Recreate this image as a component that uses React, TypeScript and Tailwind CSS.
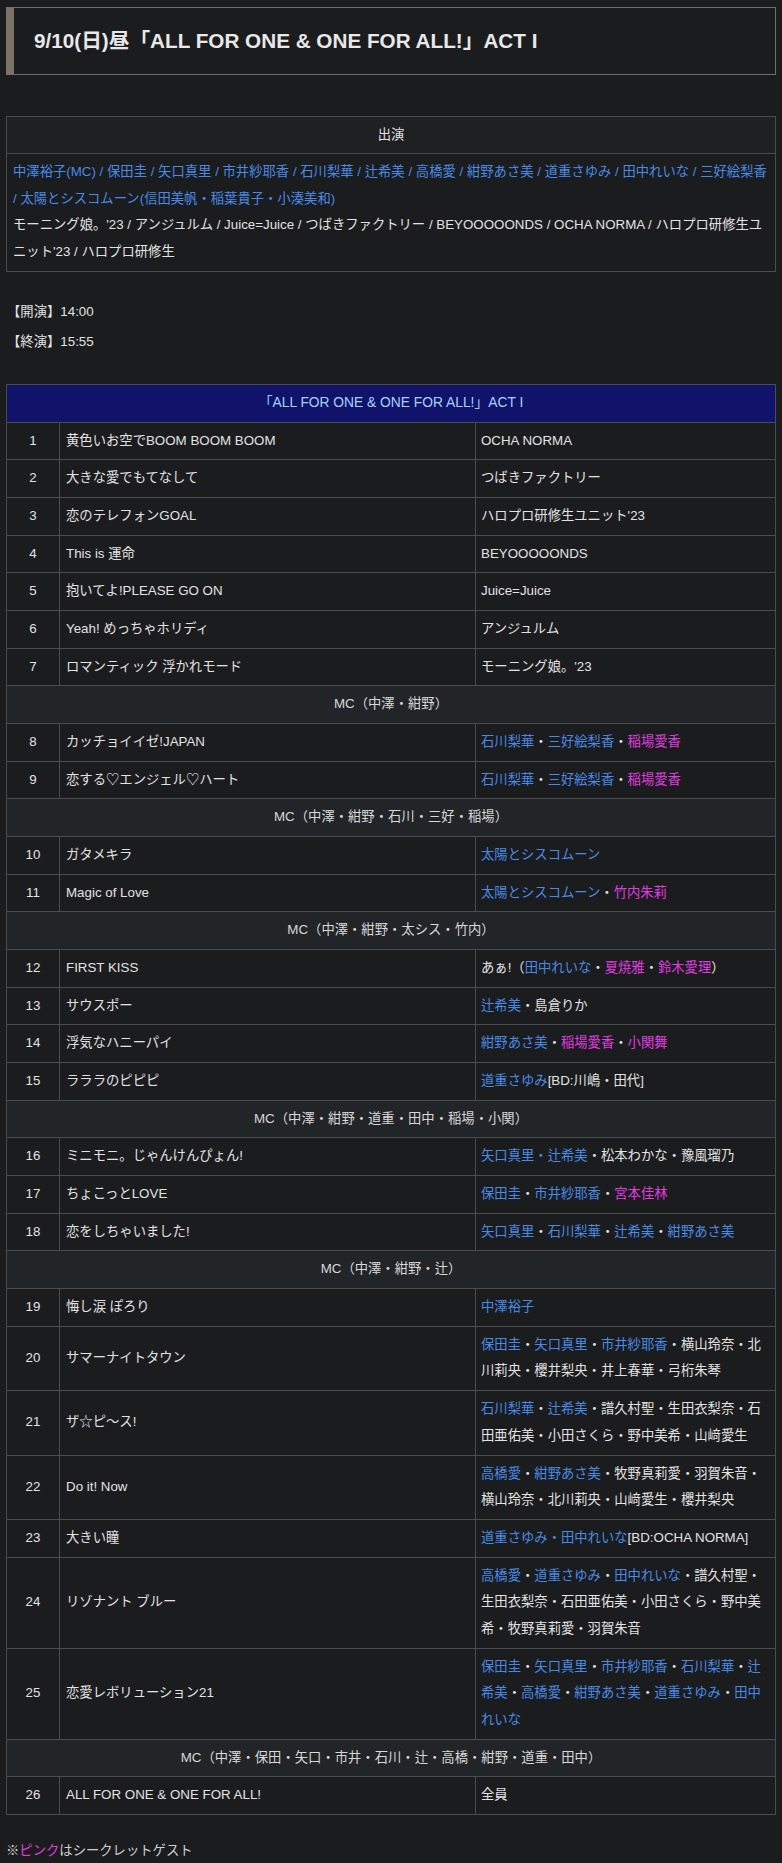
type Seg = [string, "n" | "b" | "p"];
type Row = { no?: number; song?: string; members?: Seg[]; mc?: string };

const rows: Row[] = [
  { no: 1, song: "黄色いお空でBOOM BOOM BOOM", members: [["OCHA NORMA", "n"]] },
  { no: 2, song: "大きな愛でもてなして", members: [["つばきファクトリー", "n"]] },
  { no: 3, song: "恋のテレフォンGOAL", members: [["ハロプロ研修生ユニット'23", "n"]] },
  { no: 4, song: "This is 運命", members: [["BEYOOOOONDS", "n"]] },
  { no: 5, song: "抱いてよ!PLEASE GO ON", members: [["Juice=Juice", "n"]] },
  { no: 6, song: "Yeah! めっちゃホリディ", members: [["アンジュルム", "n"]] },
  { no: 7, song: "ロマンティック 浮かれモード", members: [["モーニング娘。'23", "n"]] },
  { mc: "MC（中澤・紺野）" },
  { no: 8, song: "カッチョイイゼ!JAPAN", members: [["石川梨華", "b"], ["・", "n"], ["三好絵梨香", "b"], ["・", "n"], ["稲場愛香", "p"]] },
  { no: 9, song: "恋する♡エンジェル♡ハート", members: [["石川梨華", "b"], ["・", "n"], ["三好絵梨香", "b"], ["・", "n"], ["稲場愛香", "p"]] },
  { mc: "MC（中澤・紺野・石川・三好・稲場）" },
  { no: 10, song: "ガタメキラ", members: [["太陽とシスコムーン", "b"]] },
  { no: 11, song: "Magic of Love", members: [["太陽とシスコムーン", "b"], ["・", "n"], ["竹内朱莉", "p"]] },
  { mc: "MC（中澤・紺野・太シス・竹内）" },
  { no: 12, song: "FIRST KISS", members: [["あぁ!（", "n"], ["田中れいな", "b"], ["・", "n"], ["夏焼雅", "p"], ["・", "n"], ["鈴木愛理", "p"], ["）", "n"]] },
  { no: 13, song: "サウスポー", members: [["辻希美", "b"], ["・島倉りか", "n"]] },
  { no: 14, song: "浮気なハニーパイ", members: [["紺野あさ美", "b"], ["・", "n"], ["稲場愛香", "p"], ["・", "n"], ["小関舞", "p"]] },
  { no: 15, song: "ラララのピピピ", members: [["道重さゆみ", "b"], ["[BD:川嶋・田代]", "n"]] },
  { mc: "MC（中澤・紺野・道重・田中・稲場・小関）" },
  { no: 16, song: "ミニモニ。じゃんけんぴょん!", members: [["矢口真里・辻希美", "b"], ["・松本わかな・豫風瑠乃", "n"]] },
  { no: 17, song: "ちょこっとLOVE", members: [["保田圭", "b"], ["・", "n"], ["市井紗耶香", "b"], ["・", "n"], ["宮本佳林", "p"]] },
  { no: 18, song: "恋をしちゃいました!", members: [["矢口真里", "b"], ["・", "n"], ["石川梨華", "b"], ["・", "n"], ["辻希美", "b"], ["・", "n"], ["紺野あさ美", "b"]] },
  { mc: "MC（中澤・紺野・辻）" },
  { no: 19, song: "悔し涙 ぽろり", members: [["中澤裕子", "b"]] },
  { no: 20, song: "サマーナイトタウン", members: [["保田圭", "b"], ["・", "n"], ["矢口真里", "b"], ["・", "n"], ["市井紗耶香", "b"], ["・横山玲奈・北川莉央・櫻井梨央・井上春華・弓桁朱琴", "n"]] },
  { no: 21, song: "ザ☆ピ～ス!", members: [["石川梨華", "b"], ["・", "n"], ["辻希美", "b"], ["・譜久村聖・生田衣梨奈・石田亜佑美・小田さくら・野中美希・山﨑愛生", "n"]] },
  { no: 22, song: "Do it! Now", members: [["高橋愛", "b"], ["・", "n"], ["紺野あさ美", "b"], ["・牧野真莉愛・羽賀朱音・横山玲奈・北川莉央・山﨑愛生・櫻井梨央", "n"]] },
  { no: 23, song: "大きい瞳", members: [["道重さゆみ・田中れいな", "b"], ["[BD:OCHA NORMA]", "n"]] },
  { no: 24, song: "リゾナント ブルー", members: [["高橋愛", "b"], ["・", "n"], ["道重さゆみ", "b"], ["・", "n"], ["田中れいな", "b"], ["・譜久村聖・生田衣梨奈・石田亜佑美・小田さくら・野中美希・牧野真莉愛・羽賀朱音", "n"]] },
  { no: 25, song: "恋愛レボリューション21", members: [["保田圭", "b"], ["・", "n"], ["矢口真里", "b"], ["・", "n"], ["市井紗耶香", "b"], ["・", "n"], ["石川梨華", "b"], ["・", "n"], ["辻希美", "b"], ["・", "n"], ["高橋愛", "b"], ["・", "n"], ["紺野あさ美", "b"], ["・", "n"], ["道重さゆみ", "b"], ["・", "n"], ["田中れいな", "b"]] },
  { mc: "MC（中澤・保田・矢口・市井・石川・辻・高橋・紺野・道重・田中）" },
  { no: 26, song: "ALL FOR ONE & ONE FOR ALL!", members: [["全員", "n"]] },
];

function Members({ segs }: { segs: Seg[] }) {
  return (
    <>
      {segs.map(([t, c], i) => (
        <span
          key={i}
          className={c === "b" ? "text-[#4a8ae6]" : c === "p" ? "text-[#e03ce0]" : "text-[#e2e2e2]"}
        >
          {t}
        </span>
      ))}
    </>
  );
}

export default function App() {
  return (
    <div
      className="min-h-screen bg-[#1b1c1e] px-[6px] pt-[7px] pb-[10px] text-[13.33px] leading-[2] text-[#e2e2e2]"
      style={{ fontFamily: '"Liberation Sans", "Noto Sans CJK JP", sans-serif' }}
    >
      {/* Title */}
      <div className="flex h-[68px] items-center border border-[#6e6e6e] border-l-[8px] border-l-[#7b7366] pl-[20px]">
        <h1 className="text-[20.7px] font-bold leading-none text-[#e8e8e8]">
          9/10(日)昼「ALL FOR ONE &amp; ONE FOR ALL!」ACT I
        </h1>
      </div>

      {/* Cast */}
      <div className="mt-[41px] border border-[#4a4b4d]">
        <div className="flex h-[37px] items-center justify-center border-b border-[#4a4b4d] bg-[#1e2022]">
          出演
        </div>
        <div className="px-[6px] py-[5px] leading-[26.67px]">
          <div className="text-[#4a8ae6]">
            中澤裕子(MC) / 保田圭 / 矢口真里 / 市井紗耶香 / 石川梨華 / 辻希美 / 高橋愛 / 紺野あさ美 / 道重さゆみ / 田中れいな / 三好絵梨香 / 太陽とシスコムーン(信田美帆・稲葉貴子・小湊美和)
          </div>
          <div>
            モーニング娘。'23 / アンジュルム / Juice=Juice / つばきファクトリー / BEYOOOOONDS / OCHA NORMA / ハロプロ研修生ユニット'23 / ハロプロ研修生
          </div>
        </div>
      </div>

      {/* Times */}
      <div className="mt-[27px] flex flex-col gap-[4px] pl-[1px] leading-[26px]">
        <p>【開演】14:00</p>
        <p>【終演】15:55</p>
      </div>

      {/* Setlist */}
      <table className="mt-[29px] w-full table-fixed border-collapse">
        <colgroup>
          <col className="w-[53px]" />
          <col className="w-[416px]" />
          <col />
        </colgroup>
        <thead>
          <tr>
            <th
              colSpan={3}
              className="h-[38px] border border-[#4a4b4d] bg-[#11126a] text-center text-[13.8px] font-normal text-[#a4d4fc]"
            >
              「ALL FOR ONE &amp; ONE FOR ALL!」ACT I
            </th>
          </tr>
        </thead>
        <tbody>
          {rows.map((r, i) =>
            r.mc ? (
              <tr key={i}>
                <td
                  colSpan={3}
                  className="border border-[#4a4b4d] bg-[#222527] px-[6px] py-[5px] text-center leading-[26.67px] text-[#d8d8d8]"
                >
                  {r.mc}
                </td>
              </tr>
            ) : (
              <tr key={i}>
                <td className="border border-[#4a4b4d] py-[5px] text-center leading-[26.67px]">{r.no}</td>
                <td className="border border-[#4a4b4d] px-[6px] py-[5px] leading-[26.67px]">{r.song}</td>
                <td className="border border-[#4a4b4d] px-[5px] py-[5px] leading-[26.67px]">
                  <Members segs={r.members!} />
                </td>
              </tr>
            )
          )}
        </tbody>
      </table>

      {/* Note */}
      <p className="mt-[23px] leading-[26px] text-[#cfcfcf]">
        ※<span className="text-[#e03ce0]">ピンク</span>はシークレットゲスト
      </p>
    </div>
  );
}
